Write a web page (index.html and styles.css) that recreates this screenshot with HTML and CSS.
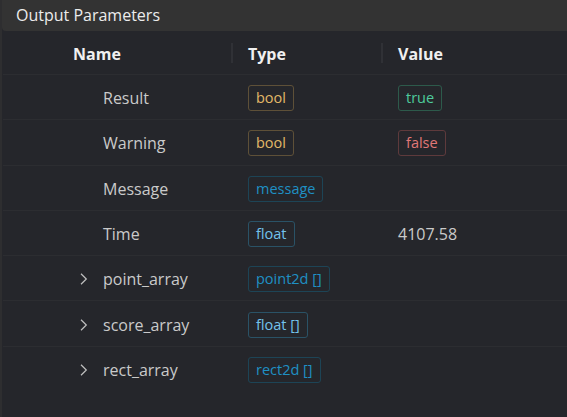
FILE: index.html
```html
<!DOCTYPE html>
<html lang="en">
<head>
    <meta charset="UTF-8">
    <title>Output Parameters</title>
    <link rel="stylesheet" href="styles.css">
</head>
<body>
    <div class="panel">
        <div class="panel-title">Output Parameters</div>
        <div class="params">
            <div class="row head">
                <div class="cell name">Name</div>
                <div class="cell type">Type</div>
                <div class="cell value">Value</div>
            </div>
            <div class="row">
                <div class="cell name"><span class="twisty"></span><span class="label">Result</span></div>
                <div class="cell type"><span class="tag bool">bool</span></div>
                <div class="cell value"><span class="tag ok">true</span></div>
            </div>
            <div class="row">
                <div class="cell name"><span class="twisty"></span><span class="label">Warning</span></div>
                <div class="cell type"><span class="tag bool">bool</span></div>
                <div class="cell value"><span class="tag bad">false</span></div>
            </div>
            <div class="row">
                <div class="cell name"><span class="twisty"></span><span class="label">Message</span></div>
                <div class="cell type"><span class="tag obj">message</span></div>
                <div class="cell value"></div>
            </div>
            <div class="row">
                <div class="cell name"><span class="twisty"></span><span class="label">Time</span></div>
                <div class="cell type"><span class="tag num">float</span></div>
                <div class="cell value">4107.58</div>
            </div>
            <div class="row">
                <div class="cell name">
                    <span class="twisty"><svg class="chevron" width="8" height="12" viewBox="0 0 8 12"><path d="M1 0.8 L6.3 6 L1 11.2" /></svg></span>
                    <span class="label">point_array</span>
                </div>
                <div class="cell type"><span class="tag obj">point2d []</span></div>
                <div class="cell value"></div>
            </div>
            <div class="row">
                <div class="cell name">
                    <span class="twisty"><svg class="chevron" width="8" height="12" viewBox="0 0 8 12"><path d="M1 0.8 L6.3 6 L1 11.2" /></svg></span>
                    <span class="label">score_array</span>
                </div>
                <div class="cell type"><span class="tag num">float []</span></div>
                <div class="cell value"></div>
            </div>
            <div class="row last">
                <div class="cell name">
                    <span class="twisty"><svg class="chevron" width="8" height="12" viewBox="0 0 8 12"><path d="M1 0.8 L6.3 6 L1 11.2" /></svg></span>
                    <span class="label">rect_array</span>
                </div>
                <div class="cell type"><span class="tag obj">rect2d []</span></div>
                <div class="cell value"></div>
            </div>
        </div>
    </div>
</body>
</html>
```

FILE: styles.css
```css
:root {
    --page-bg: #2b2b2d;
    --panel-bg: #25262b;
    --title-bg: #333333;
    --line: #2c2d31;
    --text: #e6e6e6;
    --muted: #cacaca;
}

body {
    margin: 0;
    background-color: var(--page-bg);
    font-family: "Open Sans", "Noto Sans", sans-serif;
    color: var(--text);
}

.panel {
    height: 417px;
    padding-left: 1px;
    background-color: var(--panel-bg);
    border-left: 2px solid #2e2e30;
    box-sizing: border-box;
}

.panel-title {
    height: 31px;
    margin-left: -1px;
    padding-left: 14px;
    background-color: var(--title-bg);
    border-bottom-left-radius: 4px;
    font-size: 16px;
    line-height: 30px;
    color: #ececec;
}

.row {
    display: grid;
    grid-template-columns: 228px 150px 1fr;
    height: 45.3px;
    padding-top: 2px;
    border-bottom: 1px solid var(--line);
    box-sizing: border-box;
}

.row.last {
    border-bottom: none;
}

.row.head {
    height: 44px;
    padding-top: 3px;
}

.cell {
    display: flex;
    align-items: center;
    padding-left: 17px;
    font-size: 16px;
    color: var(--muted);
}

.row.head .cell {
    position: relative;
    font-weight: 700;
    color: #f0f0f0;
}

.row.head .cell.name {
    padding-left: 70px;
}

.row.head .type::before,
.row.head .value::before {
    content: "";
    position: absolute;
    left: 0;
    top: 9px;
    width: 2px;
    height: 20px;
    background-color: #303136;
}

.cell.name {
    padding-left: 77px;
}

.twisty {
    display: flex;
    align-items: center;
    width: 23px;
}

.chevron {
    fill: none;
    stroke: #c0c0c0;
    stroke-width: 1.2;
}

.tag {
    display: inline-block;
    height: 26px;
    line-height: 24px;
    padding: 0 7px;
    border: 1px solid;
    border-radius: 3px;
    box-sizing: border-box;
    font-size: 14.5px;
}

.tag.bool {
    color: #e2b868;
    border-color: #5e5038;
}

.tag.ok {
    color: #4ecb9c;
    border-color: #2d5a4b;
}

.tag.bad {
    color: #e07878;
    border-color: #5e3a3c;
}

.tag.obj {
    color: #1f90c4;
    border-color: #1d4456;
}

.tag.num {
    color: #73c2ec;
    border-color: #2a5266;
}
```
